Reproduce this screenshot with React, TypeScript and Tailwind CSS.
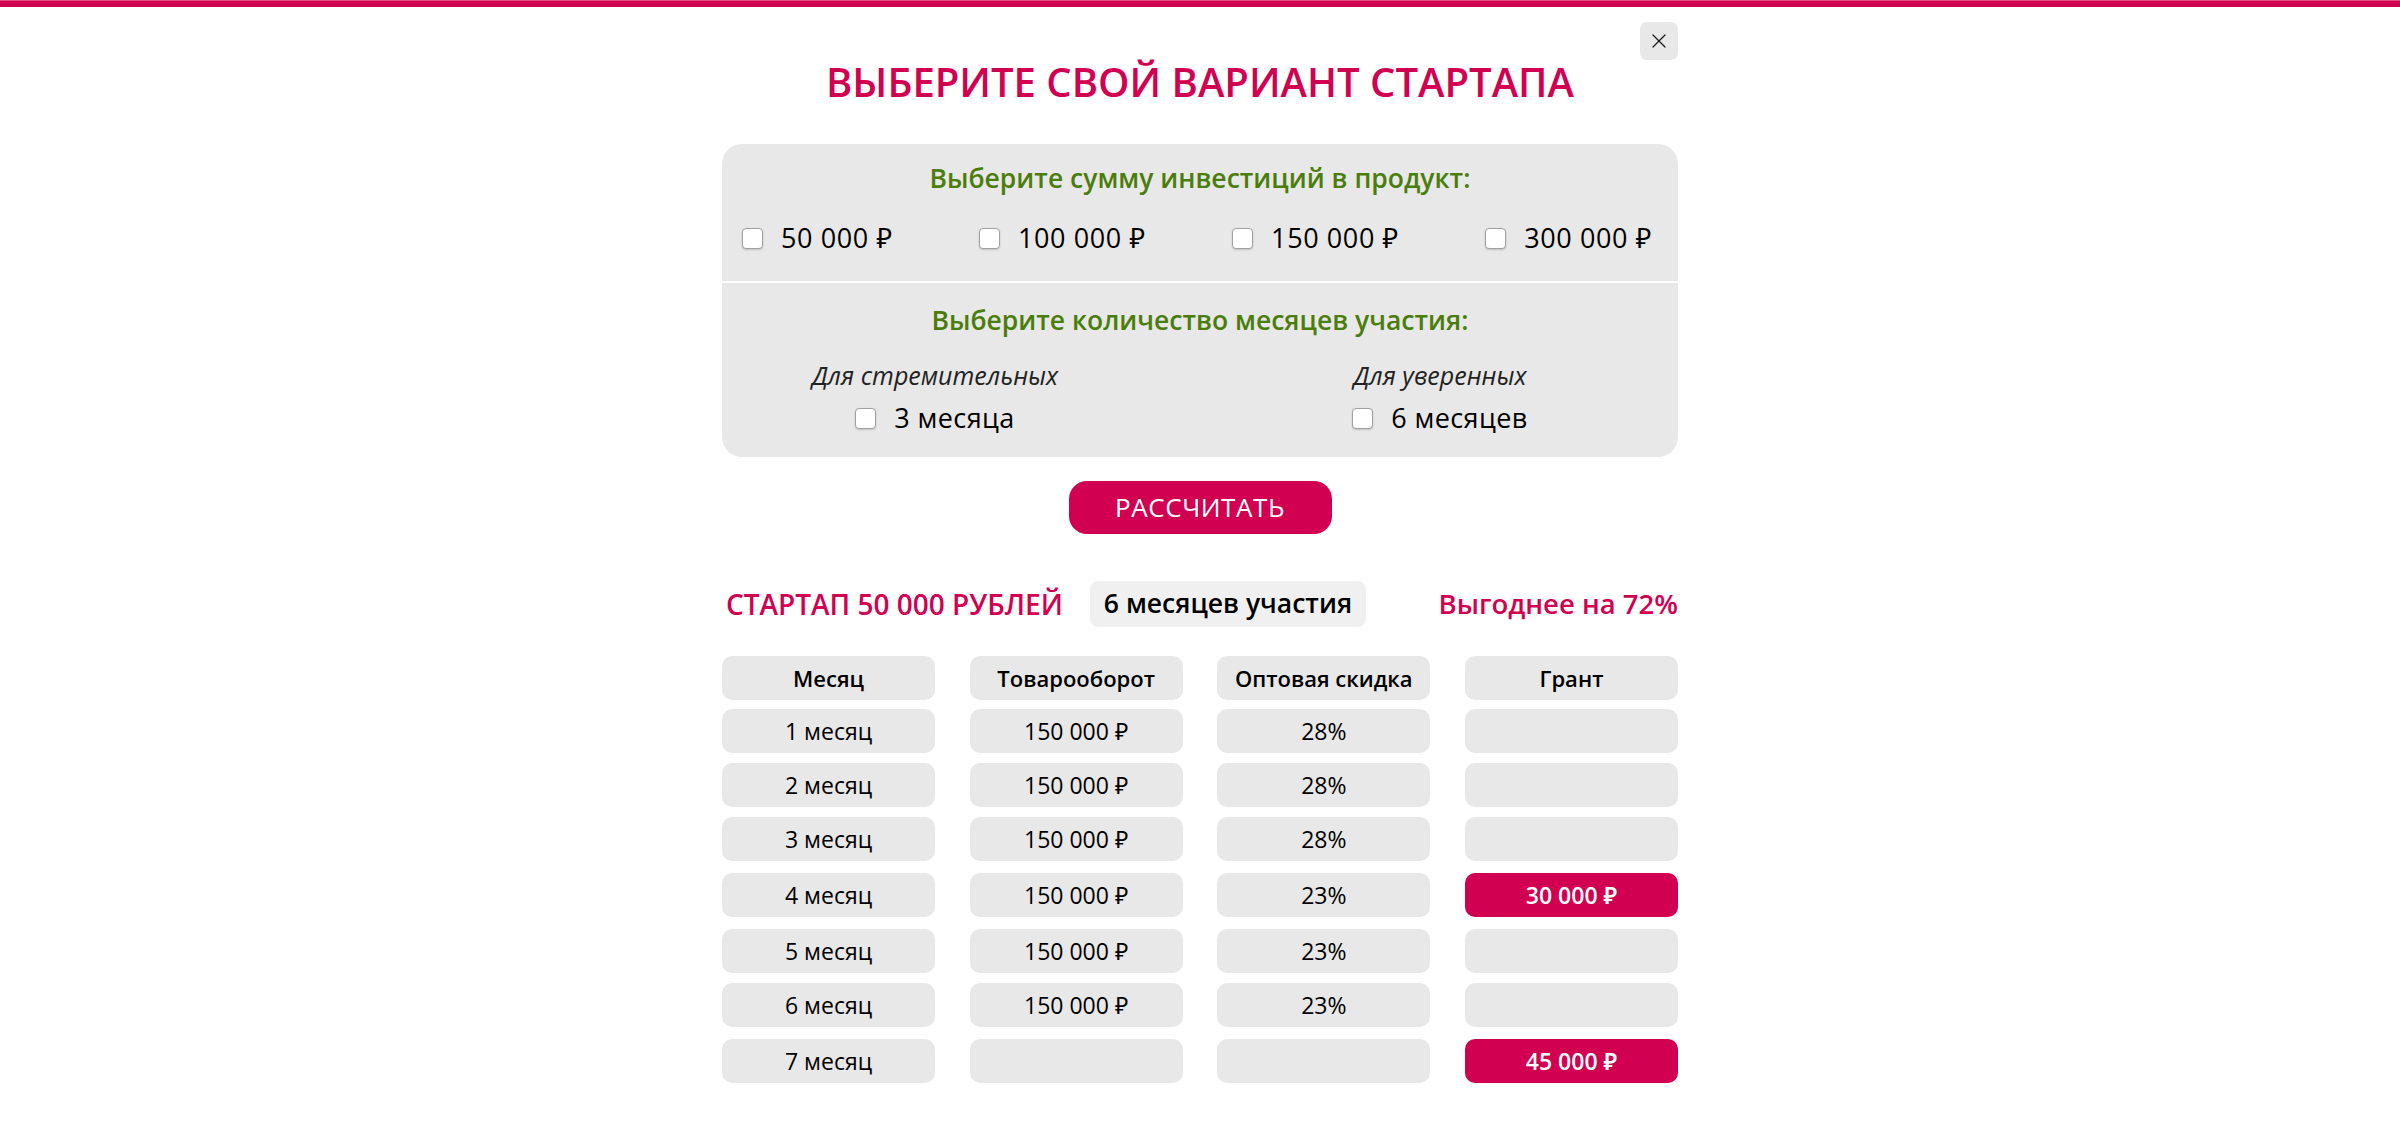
import { X } from "lucide-react";

const FONT = "font-['Open_Sans','Noto_Sans',sans-serif]";

const AMOUNTS = ["50 000 ₽", "100 000 ₽", "150 000 ₽", "300 000 ₽"];

const ROWS = [
  { month: "1 месяц", turnover: "150 000 ₽", discount: "28%", grant: "", mt: "mt-[9px]" },
  { month: "2 месяц", turnover: "150 000 ₽", discount: "28%", grant: "", mt: "mt-[10px]" },
  { month: "3 месяц", turnover: "150 000 ₽", discount: "28%", grant: "", mt: "mt-[10px]" },
  { month: "4 месяц", turnover: "150 000 ₽", discount: "23%", grant: "30 000 ₽", mt: "mt-[12px]" },
  { month: "5 месяц", turnover: "150 000 ₽", discount: "23%", grant: "", mt: "mt-[12px]" },
  { month: "6 месяц", turnover: "150 000 ₽", discount: "23%", grant: "", mt: "mt-[10px]" },
  { month: "7 месяц", turnover: "", discount: "", grant: "45 000 ₽", mt: "mt-[12px]" },
];

function Box() {
  return (
    <span className="inline-block w-[21px] h-[21px] shrink-0 rounded-[4px] border border-[#a0a0a0] bg-white shadow-[0_1px_2px_rgba(0,0,0,0.18)]" />
  );
}

function Cell({ children, hot }: { children?: React.ReactNode; hot?: boolean }) {
  return (
    <div
      className={`h-[44px] rounded-[10px] flex items-center justify-center ${
        hot ? "bg-[#d20050] text-white text-[23px] font-semibold" : "bg-[#e8e8e8] text-black text-[23px]"
      }`}
    >
      {children}
    </div>
  );
}

export default function App() {
  return (
    <div className={`min-h-screen bg-white ${FONT}`}>
      <div className="h-[7px] bg-[#d20050] border-t border-[#e0507f]" />

      <div className="relative w-[956px] mx-auto pb-10">
        {/* close */}
        <button className="absolute top-[15px] right-0 w-[38px] h-[38px] rounded-[7px] bg-[#e8e8e8] flex items-center justify-center text-[#1a1a1a]">
          <X size={24} strokeWidth={1.2} />
        </button>

        <h1 className="pt-[52px] text-center text-[40px] leading-[46px] font-semibold text-[#d20050]">
          ВЫБЕРИТЕ СВОЙ ВАРИАНТ СТАРТАПА
        </h1>

        {/* options panel */}
        <div className="mt-[39px] rounded-[20px] bg-[#e8e8e8] overflow-hidden">
          <div className="h-[137px] pt-[18px]">
            <h3 className="text-center text-[26.5px] leading-[32px] font-semibold text-[#4b7d0b]">
              Выберите сумму инвестиций в продукт:
            </h3>
            <div className="mt-[29px] flex justify-between items-center pl-[20px] pr-[26px] h-[30px]">
              {AMOUNTS.map((a) => (
                <label key={a} className="flex items-center gap-[18px] text-[27px] tracking-[0.6px] text-black">
                  <Box />
                  <span>{a}</span>
                </label>
              ))}
            </div>
          </div>

          <div className="h-[2px] bg-white" />

          <div className="h-[174px] pt-[21px]">
            <h3 className="text-center text-[26.5px] leading-[32px] font-semibold text-[#4b7d0b]">
              Выберите количество месяцев участия:
            </h3>
            <div className="mt-[24px] flex pl-[63px] gap-[205px]">
              {[
                ["Для стремительных", "3 месяца"],
                ["Для уверенных", "6 месяцев"],
              ].map(([hint, label]) => (
                <div key={label} className="w-[300px] flex flex-col items-center">
                  <span className="text-[25px] leading-[30px] italic text-[#222]">{hint}</span>
                  <label className="mt-[13px] h-[30px] flex items-center gap-[18px] text-[27px] tracking-[0.4px] text-black">
                    <Box />
                    <span>{label}</span>
                  </label>
                </div>
              ))}
            </div>
          </div>
        </div>

        <button className="mt-[24px] mx-auto block w-[263px] h-[53px] rounded-[18px] bg-[#d20050] text-white text-[26px] font-normal tracking-[0.6px]">
          РАССЧИТАТЬ
        </button>

        {/* summary */}
        <div className="mt-[47px] flex items-center h-[46px]">
          <span className="pl-[4px] text-[28px] font-semibold text-[#d20050]">СТАРТАП 50 000 РУБЛЕЙ</span>
          <span className="ml-[27px] h-[46px] px-[14px] rounded-[8px] bg-[#f0f0f0] flex items-center text-[26.5px] font-semibold text-black">
            6 месяцев участия
          </span>
          <span className="ml-auto text-[27.5px] font-semibold text-[#d20050]">Выгоднее на 72%</span>
        </div>

        {/* table */}
        <div className="mt-[29px]">
          <div className="grid grid-cols-[213px_213px_213px_213px] justify-between">
            {["Месяц", "Товарооборот", "Оптовая скидка", "Грант"].map((h) => (
              <div key={h} className="h-[44px] rounded-[10px] bg-[#e8e8e8] flex items-center justify-center text-[22px] font-semibold text-black">
                {h}
              </div>
            ))}
          </div>
          {ROWS.map((r) => (
            <div key={r.month} className={`grid grid-cols-[213px_213px_213px_213px] justify-between ${r.mt}`}>
              <Cell>{r.month}</Cell>
              <Cell>{r.turnover}</Cell>
              <Cell>{r.discount}</Cell>
              <Cell hot={!!r.grant}>{r.grant}</Cell>
            </div>
          ))}
        </div>
      </div>
    </div>
  );
}
